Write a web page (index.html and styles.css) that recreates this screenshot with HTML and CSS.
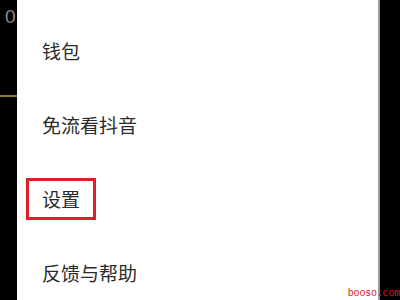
FILE: index.html
```html
<!DOCTYPE html>
<html lang="zh">
<head>
<meta charset="UTF-8" />
<meta name="viewport" content="width=device-width, initial-scale=1.0" />
<title>我</title>
<link rel="stylesheet" href="styles.css">
</head>
<body>
    <div id="screen">
        <div class="side-left">
            <div class="count">0</div>
            <div class="tab-line"></div>
        </div>

        <div id="menu">
            <div class="item">钱包</div>
            <div class="item">免流看抖音</div>
            <div class="item"><span class="mark">设置</span></div>
            <div class="item">反馈与帮助</div>
        </div>

        <div class="side-right"></div>

        <div class="watermark">booso.com</div>
    </div>
</body>
</html>
```

FILE: styles.css
```css
body
{
    margin: 0;
    background: #000;
    font-family: "Noto Sans CJK SC", "Noto Sans", sans-serif;
}
#screen
{
    position: relative;
    display: flex;
    width: 400px;
    height: 300px;
    overflow: hidden;
}
.side-left
{
    width: 17px;
    flex: none;
    background: #000;
    overflow: hidden;
}
.count
{
    padding: 6px 0 0 5px;
    height: 89px;
    color: #8a8a8a;
    font-family: "Liberation Sans", sans-serif;
    font-size: 19px;
    line-height: 22px;
}
.tab-line
{
    height: 2px;
    background: #8c7a2c;
}
#menu
{
    flex: 1;
    background: #fff;
    padding-top: 14px;
}
.item
{
    height: 74px;
    line-height: 74px;
    padding-left: 25px;
    color: #2b2b2b;
    font-size: 19px;
}
.mark
{
    display: inline-block;
    margin-left: -16px;
    padding: 0 13px;
    line-height: 36px;
    border: 3px solid #dd1f2b;
}
.side-right
{
    width: 20px;
    flex: none;
    background: #000;
    border-left: 2px solid #9a9a9a;
}
.watermark
{
    position: absolute;
    right: 0;
    bottom: 1px;
    color: #e0141e;
    font-family: "Liberation Mono", monospace;
    font-size: 10px;
    line-height: 11px;
    letter-spacing: -0.2px;
}
```
